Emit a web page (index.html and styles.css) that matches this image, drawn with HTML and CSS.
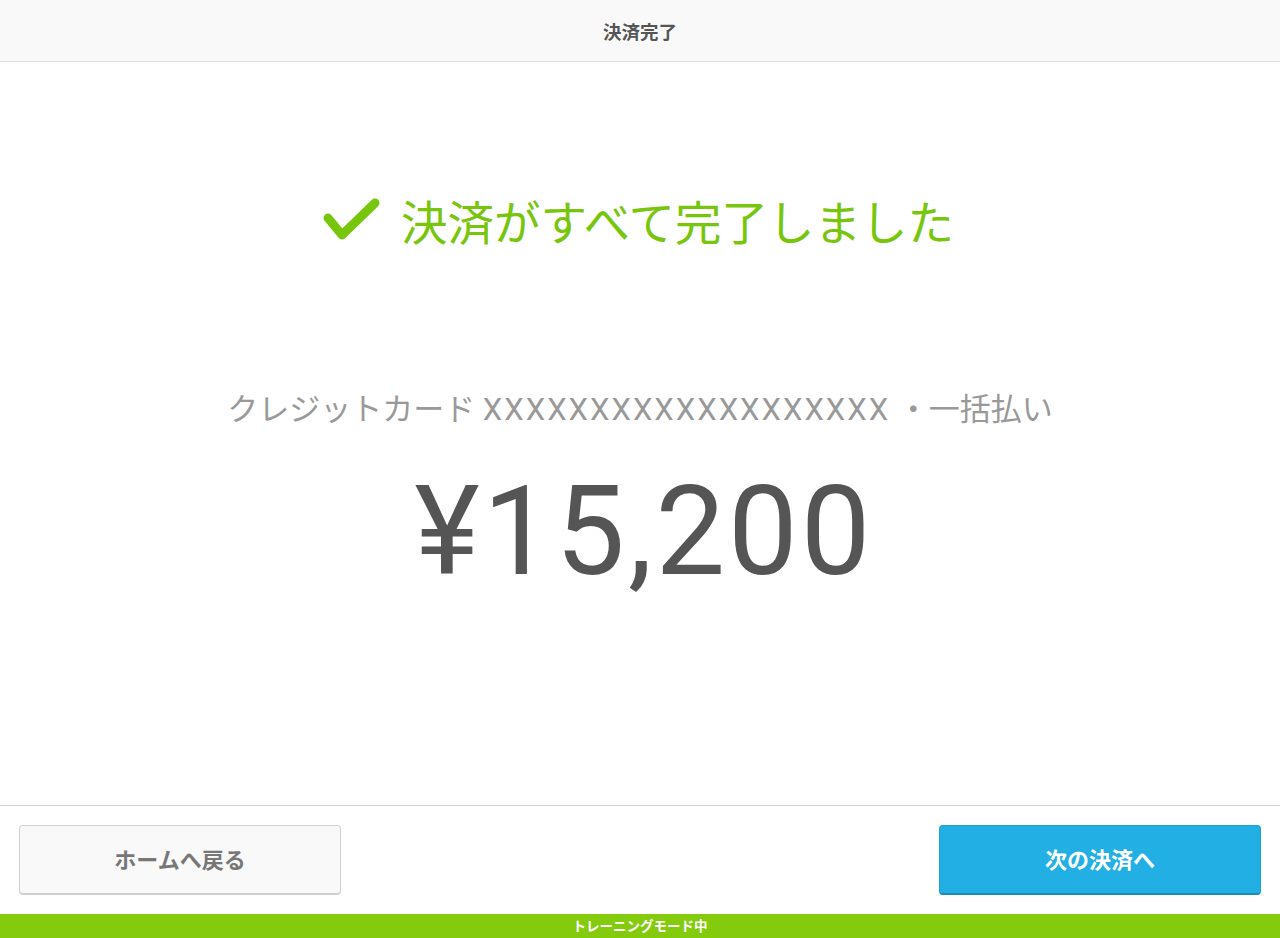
FILE: index.html
```html
<!DOCTYPE html>
<html lang="ja">
<head>
    <meta charset="UTF-8">
    <meta name="viewport" content="width=device-width, initial-scale=1.0">
    <title>決済完了</title>
    <link rel="stylesheet" href="styles.css">
</head>
<body>
    <header class="topbar">
        <h1>決済完了</h1>
    </header>

    <main class="content">
        <div class="success">
            <svg class="check" width="58" height="44" viewBox="0 0 58 44">
                <polyline points="6,20 20,37 53,5" fill="none" stroke="#78c50e" stroke-width="9" stroke-linecap="round" stroke-linejoin="round"/>
            </svg>
            <span>決済がすべて完了しました</span>
        </div>
        <p class="method">クレジットカード <span class="card-no">XXXXXXXXXXXXXXXXXXX</span> ・一括払い</p>
        <p class="amount">¥15,200</p>
    </main>

    <footer class="actions">
        <button class="btn btn-home" type="button">ホームへ戻る</button>
        <button class="btn btn-next" type="button">次の決済へ</button>
    </footer>

    <div class="training">トレーニングモード中</div>
</body>
</html>
```

FILE: styles.css
```css
body {
    font-family: Roboto, "Noto Sans CJK JP", sans-serif;
    margin: 0;
    padding: 0;
    height: 938px;
    display: flex;
    flex-direction: column;
    background-color: #fff;
    color: #555;
}

.topbar {
    height: 61px;
    background-color: #f9f9f9;
    border-bottom: 1px solid #dcdcdc;
    display: flex;
    justify-content: center;
    align-items: center;
}

.topbar h1 {
    margin: 0;
    font-size: 18.5px;
    font-weight: bold;
    color: #555;
}

.content {
    flex: 1;
    display: flex;
    flex-direction: column;
    align-items: center;
    padding-top: 127px;
}

.success {
    display: flex;
    align-items: center;
    gap: 21px;
    height: 60px;
    color: #78c50e;
    font-size: 46.5px;
    margin-right: 4px;
}

.success .check {
    margin-top: 2px;
}

.method {
    margin: 141px 0 0;
    font-size: 31px;
    line-height: 40px;
    color: #999;
}

.card-no {
    letter-spacing: 2px;
}

.amount {
    margin: 40px 0 0 8px;
    font-size: 124px;
    line-height: 124px;
    letter-spacing: 3px;
    color: #555;
}

.actions {
    height: 108px;
    border-top: 1px solid #cfcfcf;
    display: flex;
    justify-content: space-between;
    align-items: center;
    padding: 0 19px;
}

.btn {
    width: 322px;
    height: 70px;
    padding: 0 0 4px;
    border-radius: 4px;
    font-family: Roboto, "Noto Sans CJK JP", sans-serif;
    font-size: 22px;
    font-weight: bold;
    cursor: pointer;
}

.btn-home {
    background-color: #f9f9f9;
    border: 1px solid #cfcfcf;
    border-bottom-width: 2px;
    color: #777;
}

.btn-next {
    background-color: #22afe3;
    border: 1px solid #1f9fd0;
    border-bottom: 2px solid #1a8cbb;
    color: #fff;
}

.training {
    height: 24px;
    background-color: #84cb0e;
    color: #fff;
    font-size: 13.5px;
    font-weight: bold;
    line-height: 24px;
    text-align: center;
}
```
